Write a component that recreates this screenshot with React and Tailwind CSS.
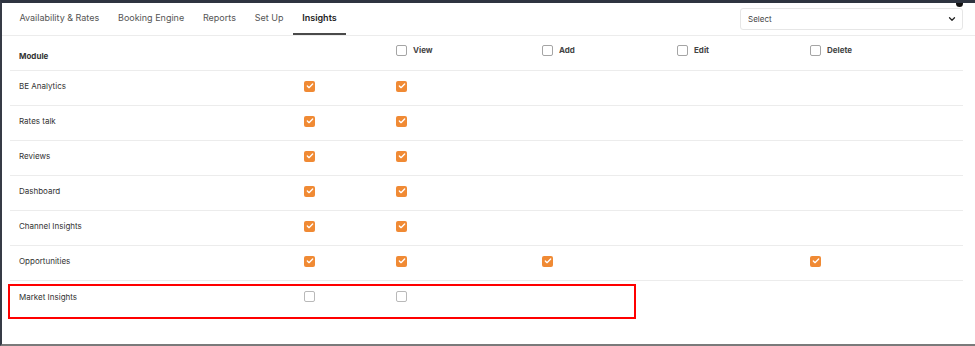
import { ChevronDown, Check } from 'lucide-react';

const tabs = ['Availability & Rates', 'Booking Engine', 'Reports', 'Set Up', 'Insights'];

// column widths after the module column: [unlabelled, View, Add, Edit, Delete]
const colW = ['w-[92px]', 'w-[146px]', 'w-[135px]', 'w-[133px]', 'w-[120px]'];

const rows = [
    { name: 'BE Analytics', checks: [true, true, null, null, null] },
    { name: 'Rates talk', checks: [true, true, null, null, null] },
    { name: 'Reviews', checks: [true, true, null, null, null] },
    { name: 'Dashboard', checks: [true, true, null, null, null] },
    { name: 'Channel Insights', checks: [true, true, null, null, null] },
    { name: 'Opportunities', checks: [true, true, true, null, true] },
    { name: 'Market Insights', checks: [false, false, null, null, null], flagged: true },
];

const Box = ({ checked }) =>
    checked ? (
        <span className="w-[11px] h-[11px] rounded-[2px] bg-[#f08a34] flex items-center justify-center">
            <Check size={8} strokeWidth={4} className="text-white" />
        </span>
    ) : (
        <span className="w-[11px] h-[11px] rounded-[2px] border border-[#b9b9b9] bg-white" />
    );

const App = () => {
    return (
        <div className="w-[975px] h-[346px] bg-white relative overflow-hidden font-['Inter',sans-serif] border-t-[3px] border-t-[#2e3440] border-l-2 border-l-[#363b46] border-b-2 border-b-[#7a7a7a]">
            {/* close dot */}
            <span className="absolute right-[12px] top-[-3px] w-[7px] h-[7px] rounded-full bg-[#111]" />

            {/* Tabs */}
            <div className="flex items-center h-[33px] border-b border-[#ececec] pl-[8px] pr-[12px]">
                {tabs.map(t => (
                    <div
                        key={t}
                        className={`h-full flex items-center px-[9.4px] text-[9px] border-b-2 ${t === 'Insights' ? 'border-[#4a4a4a] text-[#222] font-semibold' : 'border-transparent text-[#555]'}`}
                    >
                        {t}
                    </div>
                ))}
                <div className="ml-auto w-[223px] h-[22px] border border-[#e6e6e6] rounded-[3px] flex items-center justify-between pl-[7px] pr-[5px]">
                    <span className="text-[8px] text-[#444]">Select</span>
                    <ChevronDown size={10} strokeWidth={3} className="text-[#222]" />
                </div>
            </div>

            {/* Table */}
            <div className="ml-[8px] w-[953px]">
                <div className="flex h-[35px] border-b border-[#ececec]">
                    <div className="w-[289px] pl-[9px] pt-[14px] text-[8px] font-bold text-[#333]">Module</div>
                    <div className={colW[0]} />
                    {['View', 'Add', 'Edit', 'Delete'].map((h, i) => (
                        <div key={h} className={`${colW[i + 1]} pl-[5px] pt-[9px] flex items-start gap-[6px]`}>
                            <span className="w-[11px] h-[11px] rounded-[2px] border border-[#a5a5a5] bg-white" />
                            <span className="text-[8px] font-bold text-[#444] leading-[11px]">{h}</span>
                        </div>
                    ))}
                </div>

                {rows.map((r, idx) => (
                    <div
                        key={r.name}
                        className={`relative flex items-center h-[35px] pb-[4px] ${idx < rows.length - 1 ? 'border-b border-[#ececec]' : ''}`}
                    >
                        <div className="w-[289px] pl-[9px] text-[8px] text-[#333]">{r.name}</div>
                        {r.checks.map((c, i) => (
                            <div key={i} className={`${colW[i]} pl-[5px] flex`}>
                                {c !== null && <Box checked={c} />}
                            </div>
                        ))}
                        {r.flagged && (
                            <span className="absolute left-[-2px] top-[3px] w-[628px] h-[35px] border-2 border-[#ff0000]" />
                        )}
                    </div>
                ))}
            </div>
        </div>
    );
};

export default App;
